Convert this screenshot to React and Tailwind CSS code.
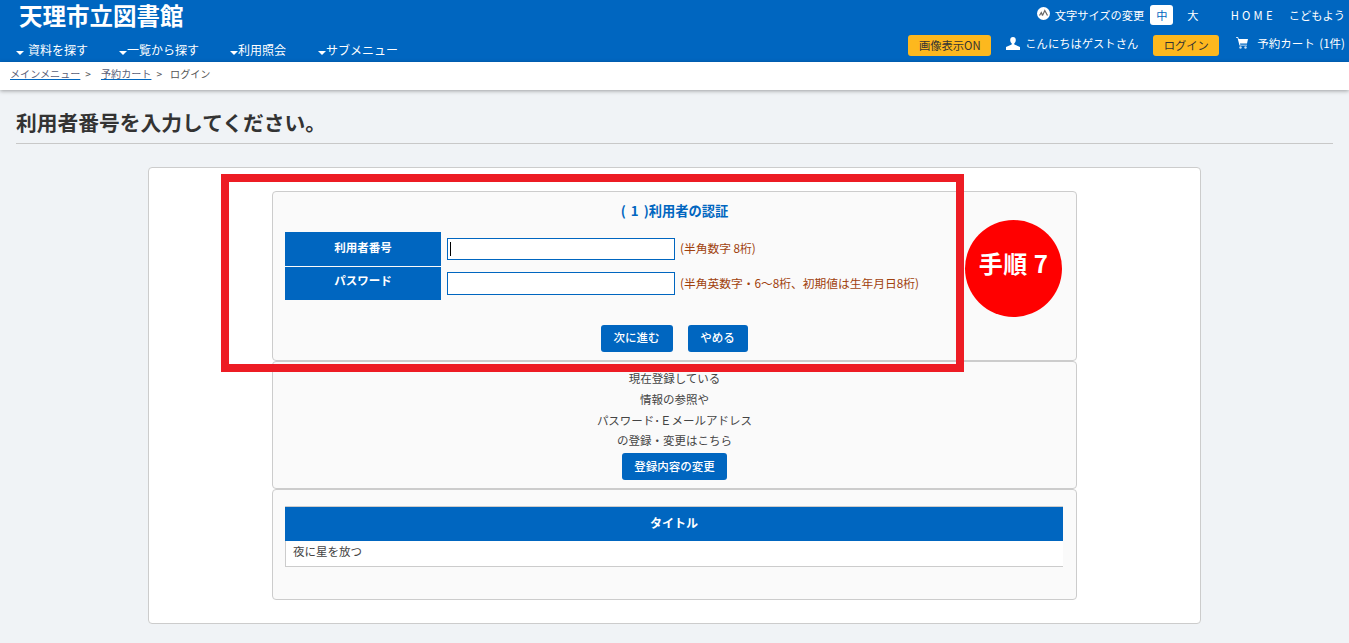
const font = { fontFamily: '"Noto Sans CJK JP", "Liberation Sans", sans-serif' }

const Caret = () => (
  <svg width="8" height="4" viewBox="0 0 8 4" className="shrink-0 mt-[5px]">
    <path d="M0 0h8L4 4z" fill="#fff" />
  </svg>
)

const FontSizeIcon = () => (
  <svg width="13" height="13" viewBox="0 0 13 13" className="shrink-0 -mt-[3px]">
    <circle cx="6.500" cy="6.500" r="6.500" fill="#fff" />
    <path d="M2.500 8.500 4.300 5.500 5.500 8.500M5.500 8.500 7.800 3.500 10.500 8.500" fill="none" stroke="#666" strokeWidth="1.200" />
  </svg>
)

const UserIcon = () => (
  <svg width="14" height="13" viewBox="0 0 14 13" className="shrink-0">
    <path d="M7 0c1.800 0 2.800 1.200 2.800 3 0 1.400-.6 2.700-1.500 3.300v1.200L14 10v3H0v-3l5.700-2.500V6.300C4.800 5.700 4.200 4.400 4.200 3 4.200 1.200 5.200 0 7 0z" fill="#fff" />
  </svg>
)

const CartIcon = () => (
  <svg width="12" height="12" viewBox="0 0 12 12" className="shrink-0 -mt-[1px]">
    <path d="M0 0h2l.8 2H12l-1 4.500H4l.3 1.200H11v.8H3.500L1.500.8H0z" fill="#fff" />
    <circle cx="4.500" cy="10.500" r="1.200" fill="#cfe0f0" />
    <circle cx="9.500" cy="10.500" r="1.200" fill="#cfe0f0" />
  </svg>
)

const navItems = [
  { label: '資料を探す', width: 'w-[103px]', gap: 'gap-[4px]' },
  { label: '一覧から探す', width: 'w-[111px]', gap: 'gap-0' },
  { label: '利用照会', width: 'w-[88px]', gap: 'gap-0' },
  { label: 'サブメニュー', width: 'w-auto', gap: 'gap-0' },
]

const Header = () => (
  <header className="h-[62px] bg-[#0066c0] text-white flex justify-between">
    <div className="pl-4">
      <h1 className="text-[23.5px] leading-[30px] font-bold pl-[3px] whitespace-nowrap">天理市立図書館</h1>
      <nav className="flex mt-[11px] text-[12px] leading-[18px]">
        {navItems.map((item) => (
          <a key={item.label} className={`flex items-center ${item.width} ${item.gap}`}>
            <Caret />
            {item.label}
          </a>
        ))}
      </nav>
    </div>
    <div className="flex flex-col items-end pr-[4px]">
      <div className="flex items-center h-[20px] mt-[5px] text-[11.25px]">
        <FontSizeIcon />
        <span className="ml-[5px]">文字サイズの変更</span>
        <span className="ml-[6px] w-[23px] h-[20px] rounded-[3px] bg-white text-[#0066c0] flex items-center justify-center">中</span>
        <span className="ml-[14px]">大</span>
        <span className="ml-[32px] tracking-[3.2px]">HOME</span>
        <span className="ml-[13px]">こどもよう</span>
      </div>
      <div className="flex items-center mt-[9px] text-[11.3px] h-[22px]">
        <span className="w-[83px] h-[21px] rounded-[3px] bg-[#fdb81e] text-[#333] flex items-center justify-center">画像表示ON</span>
        <span className="ml-[15px] flex items-center gap-[5px] -mt-[3px]"><UserIcon />こんにちはゲストさん</span>
        <span className="ml-[15px] w-[66px] h-[21px] rounded-[3px] bg-[#fdb81e] text-[#333] flex items-center justify-center">ログイン</span>
        <span className="ml-[17px] flex items-center gap-[9px] -mt-[3px] text-[11.5px] [word-spacing:2px]"><CartIcon />予約カート (1件)</span>
      </div>
    </div>
  </header>
)

const Breadcrumb = () => (
  <div className="h-[28px] bg-white shadow-[0_1px_4px_rgba(0,0,0,0.35)] pl-[10px] flex items-center text-[10.1px] text-[#555] relative pb-[5px]">
    <a className="underline text-[#5a6078] decoration-[#0066c0]">メインメニュー</a>
    <span className="ml-[5px]">&gt;</span>
    <a className="ml-[10px] underline text-[#5a6078] decoration-[#0066c0]">予約カート</a>
    <span className="ml-[5px]">&gt;</span>
    <span className="ml-[8px]">ログイン</span>
  </div>
)

const BlueButton = ({ className, children }) => (
  <button className={`h-[27px] rounded-[3px] bg-[#0066c0] text-white text-[11.5px] font-medium pb-[1px] ${className}`}>
    {children}
  </button>
)

const FormRow = ({ label, hint, thClass, labelClass, inputClass, caret }) => (
  <div className={`flex items-center ${thClass}`}>
    <div className={`w-[156px] h-full bg-[#0066c0] text-white text-[11.5px] font-bold flex justify-center ${labelClass}`}>
      {label}
    </div>
    <div className={`ml-[6px] w-[228px] border border-[#0066c0] bg-white flex items-center pl-[2px] ${inputClass}`}>
      {caret && <span className="w-px h-[14px] bg-black" />}
    </div>
    <span className="ml-[5px] pb-[2px] text-[11.75px] text-[#a0410d] whitespace-nowrap">{hint}</span>
  </div>
)

const App = () => (
  <div style={font} className="relative min-h-screen bg-[#f0f3f6] text-[#333] overflow-hidden">
    <Header />
    <Breadcrumb />

    <div className="px-4">
      <h2 className="mt-[18px] h-[35px] text-[20.75px] leading-[28px] font-bold border-b border-[#c8c8c8] box-content pb-0 text-[#333]">
        利用者番号を入力してください。
      </h2>
    </div>

    <main className="ml-[148px] mt-[23px] w-[1053px] h-[457px] bg-white border border-[#cccccc] rounded-[4px] pt-[23px] pl-[123px]">
      <section className="relative w-[805px] h-[170px] bg-[#fafafa] border border-[#cccccc] rounded-[4px] px-[12px]">
        <h3 className="mt-[10px] h-[18px] text-center text-[13.25px] leading-[18px] font-bold text-[#0066c0] [word-spacing:2px]">( 1 )利用者の認証</h3>
        <div className="mt-[12px] flex flex-col gap-px">
          <FormRow label="利用者番号" hint="(半角数字 8桁)" thClass="h-[34px]" labelClass="pt-[7px]" inputClass="h-[22px]" caret />
          <FormRow label="パスワード" hint="(半角英数字・6～8桁、初期値は生年月日8桁)" thClass="h-[33px]" labelClass="pt-[5px]" inputClass="h-[23px]" />
        </div>
        <div className="mt-[25px] flex justify-center gap-[15px] pr-[1px]">
          <BlueButton className="w-[72px]">次に進む</BlueButton>
          <BlueButton className="w-[60px]">やめる</BlueButton>
        </div>
      </section>

      <section className="w-[805px] h-[128px] bg-[#fafafa] border border-[#cccccc] rounded-[4px] flex flex-col items-center pt-[6px] text-[11.5px] leading-[20.75px] text-[#444]">
        <p>現在登録している</p>
        <p>情報の参照や</p>
        <p>パスワード･Ｅメールアドレス</p>
        <p>の登録・変更はこちら</p>
        <BlueButton className="w-[105px] mt-[2px]">登録内容の変更</BlueButton>
      </section>

      <section className="w-[805px] h-[111px] bg-[#fafafa] border border-[#cccccc] rounded-[4px] px-[12px] pt-[16px]">
        <div className="w-[778px] h-[61px] bg-white border-t border-l border-b border-[#cccccc]">
          <div className="h-[34px] -ml-px bg-[#0066c0] text-white text-[12px] font-bold flex items-center justify-center pb-[3px]">タイトル</div>
          <div className="pl-[7px] text-[11.5px] leading-[20px] text-[#444]">夜に星を放つ</div>
        </div>
      </section>
    </main>

    {/* 手順のマーク */}
    <div className="absolute left-[965px] top-[220px] w-[97px] h-[97px] rounded-full bg-[#ff0000] text-white text-[24px] font-bold flex items-center justify-center tracking-[0.5px] pb-[12px]">
      手順 7
    </div>

    {/* 赤枠の注釈 */}
    <div className="absolute left-[221px] top-[174px] w-[743px] h-[198px] border-[8px] border-[#ed1c24] pointer-events-none" />
  </div>
)

export default App
